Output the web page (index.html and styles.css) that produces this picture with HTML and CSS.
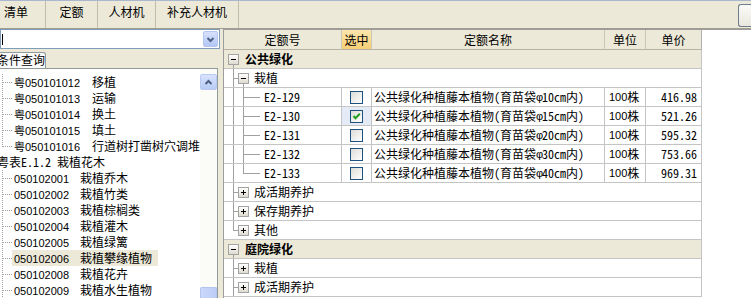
FILE: index.html
```html
<!DOCTYPE html>
<html lang="zh-CN">
<head>
<meta charset="utf-8">
<title>定额</title>
<link rel="stylesheet" href="styles.css">
</head>
<body>
<div class="app">
  <div class="topbar">
    <div class="tab t1">清单</div>
    <div class="tab t2">定额</div>
    <div class="tab t3">人材机</div>
    <div class="tab t4">补充人材机</div>
    <div class="spacer"></div>
    <div class="tbtn"></div>
  </div>
  <div class="main">
    <div class="left">
      <div class="combo">
        <span class="caret"></span>
        <span class="ddbtn"><svg width="13" height="13" viewBox="0 0 13 13"><polyline points="3.5,5 6.5,8 9.5,5" fill="none" stroke="#4d6185" stroke-width="2"/></svg></span>
      </div>
      <div class="qtab">条件查询</div>
      <div class="treepanel">
        <div class="treelist">
          <div class="tnode"><span class="lbl"><span class="code cw1">粤050101012</span>移植</span></div>
          <div class="tnode"><span class="lbl"><span class="code cw1">粤050101013</span>运输</span></div>
          <div class="tnode"><span class="lbl"><span class="code cw1">粤050101014</span>换土</span></div>
          <div class="tnode"><span class="lbl"><span class="code cw1">粤050101015</span>填土</span></div>
          <div class="tnode last"><span class="lbl"><span class="code cw1">粤050101016</span>行道树打凿树穴调堆</span></div>
          <div class="tnode root"><span class="lbl">粤表E.1.2 栽植花木</span></div>
          <div class="tnode"><span class="lbl"><span class="code cw2">050102001</span>栽植乔木</span></div>
          <div class="tnode"><span class="lbl"><span class="code cw2">050102002</span>栽植竹类</span></div>
          <div class="tnode"><span class="lbl"><span class="code cw2">050102003</span>栽植棕榈类</span></div>
          <div class="tnode"><span class="lbl"><span class="code cw2">050102004</span>栽植灌木</span></div>
          <div class="tnode"><span class="lbl"><span class="code cw2">050102005</span>栽植绿篱</span></div>
          <div class="tnode"><span class="lbl sel"><span class="code cw2">050102006</span>栽植攀缘植物</span></div>
          <div class="tnode"><span class="lbl"><span class="code cw2">050102008</span>栽植花卉</span></div>
          <div class="tnode"><span class="lbl"><span class="code cw2">050102009</span>栽植水生植物</span></div>
        </div>
        <div class="vscroll">
          <div class="sbtn"><svg width="13" height="13" viewBox="0 0 13 13"><polyline points="3.5,8 6.5,5 9.5,8" fill="none" stroke="#4d6185" stroke-width="2"/></svg></div>
          <div class="track"></div>
          <div class="thumb"></div>
        </div>
      </div>
    </div>
    <div class="right">
      <div class="grid">
        <div class="hd">定额号</div>
        <div class="hd hsel">选中</div>
        <div class="hd">定额名称</div>
        <div class="hd">单位</div>
        <div class="hd">单价</div>

        <div class="cell grow groot"><span class="exp"></span><b class="gname">公共绿化</b></div>
        <div class="cell grow l2 open"><span class="exp"></span><span class="gtxt">栽植</span></div>

        <div class="cell k1 l3">E2-129</div>
        <div class="cell k2"><span class="cb"></span></div>
        <div class="cell k3">公共绿化种植藤本植物(育苗袋<span class="phi">φ</span>10cm内)</div>
        <div class="cell k4"><span class="sans">100</span>株</div>
        <div class="cell k5">416.98</div>

        <div class="cell k1 l3">E2-130</div>
        <div class="cell k2 on"><span class="cb"><svg width="11" height="11" viewBox="0 0 11 11"><path d="M2.5 5 L4.5 7.2 L8.8 2.8" fill="none" stroke="#21a121" stroke-width="2"/></svg></span></div>
        <div class="cell k3">公共绿化种植藤本植物(育苗袋<span class="phi">φ</span>15cm内)</div>
        <div class="cell k4"><span class="sans">100</span>株</div>
        <div class="cell k5">521.26</div>

        <div class="cell k1 l3">E2-131</div>
        <div class="cell k2"><span class="cb"></span></div>
        <div class="cell k3">公共绿化种植藤本植物(育苗袋<span class="phi">φ</span>20cm内)</div>
        <div class="cell k4"><span class="sans">100</span>株</div>
        <div class="cell k5">595.32</div>

        <div class="cell k1 l3">E2-132</div>
        <div class="cell k2"><span class="cb"></span></div>
        <div class="cell k3">公共绿化种植藤本植物(育苗袋<span class="phi">φ</span>30cm内)</div>
        <div class="cell k4"><span class="sans">100</span>株</div>
        <div class="cell k5">753.66</div>

        <div class="cell k1 l3 last">E2-133</div>
        <div class="cell k2"><span class="cb"></span></div>
        <div class="cell k3">公共绿化种植藤本植物(育苗袋<span class="phi">φ</span>40cm内)</div>
        <div class="cell k4"><span class="sans">100</span>株</div>
        <div class="cell k5">969.31</div>

        <div class="cell grow l2"><span class="exp plus"></span><span class="gtxt">成活期养护</span></div>
        <div class="cell grow l2"><span class="exp plus"></span><span class="gtxt">保存期养护</span></div>
        <div class="cell grow l2 last"><span class="exp plus"></span><span class="gtxt">其他</span></div>

        <div class="cell grow groot"><span class="exp"></span><b class="gname">庭院绿化</b></div>
        <div class="cell grow l2"><span class="exp plus"></span><span class="gtxt">栽植</span></div>
        <div class="cell grow l2"><span class="exp plus"></span><span class="gtxt">成活期养护</span></div>
      </div>
    </div>
  </div>
</div>
</body>
</html>
```
FILE: styles.css
```css
* { box-sizing: border-box; }
html, body { margin: 0; padding: 0; }
body {
  width: 751px;
  height: 298px;
  overflow: hidden;
  background: #ece9d8;
  font-family: "Noto Sans Mono CJK SC", "Noto Sans CJK SC", sans-serif;
  font-size: 12px;
  color: #000;
}
.app { display: flex; flex-direction: column; height: 298px; }

/* top tab bar */
.topbar {
  height: 29px;
  flex-shrink: 0;
  display: flex;
  border-top: 1px solid #a9b8cf;
  border-bottom: 1px solid #a19e90;
  background: #ece9d8;
}
.tab {
  display: flex;
  align-items: center;
  justify-content: center;
  border-right: 1px solid #c0bdae;
  padding-bottom: 5px;
  line-height: 14px;
  white-space: nowrap;
}
.t1 { width: 46px; justify-content: flex-start; padding-left: 4px; }
.t2 { width: 52px; }
.t3 { width: 58px; }
.t4 { width: 83px; }
.spacer { flex: 1; }
.tbtn {
  width: 13px;
  margin: 3px 0 1px;
  border: 1px solid #6f7c8c;
  border-right: none;
  border-radius: 3px 0 0 3px;
  background: linear-gradient(#fbfbf8, #e9e7dd);
}

.main { flex: 1; min-height: 0; display: flex; }

/* left panel */
.left { width: 220px; display: flex; flex-direction: column; }
.combo {
  height: 20px;
  border: 1px solid #7f9db9;
  background: #fff;
  display: flex;
  align-items: center;
  justify-content: space-between;
  padding: 0 1px 0 1px;
}
.caret { width: 1px; height: 11px; background: #000; }
.ddbtn {
  width: 15px;
  height: 16px;
  border: 1px solid #b4c6f0;
  border-radius: 2px;
  background: linear-gradient(#d6e1fc, #b4c7f4);
  display: flex;
  align-items: center;
  justify-content: center;
}
.qtab {
  margin-top: 3px;
  width: 46px;
  height: 16px;
  border: 1px solid #919b9c;
  border-left: none;
  border-bottom: none;
  border-radius: 0 3px 0 0;
  background: #fcfcfe;
  line-height: 14px;
  white-space: nowrap;
  overflow: hidden;
  text-indent: -3px;
}
.treepanel {
  flex: 1;
  min-height: 0;
  width: 218px;
  display: flex;
  background: #fff;
  border-top: 1px solid #919b9c;
  border-right: 1px solid #919b9c;
}
.treelist { flex: 1; overflow: hidden; padding-top: 5px; }
.tnode {
  height: 16px;
  line-height: 16px;
  white-space: nowrap;
  padding-left: 14px;
  background:
    repeating-linear-gradient(to right, #a0a0a0 0 1px, transparent 1px 2px) 3px 8px / 9px 1px no-repeat,
    repeating-linear-gradient(#a0a0a0 0 1px, transparent 1px 2px) 2px 0 / 1px 100% no-repeat;
}
.tnode.last {
  background:
    repeating-linear-gradient(to right, #a0a0a0 0 1px, transparent 1px 2px) 3px 8px / 9px 1px no-repeat,
    repeating-linear-gradient(#a0a0a0 0 1px, transparent 1px 2px) 2px 0 / 1px 9px no-repeat;
}
.tnode.root { padding-left: 0; background: none; }
.tnode.root .lbl { margin-left: -3px; padding: 0; }
.lbl { display: inline-block; padding: 0 6px 0 2px; margin-left: -2px; height: 16px; }
.lbl.sel { background: #ece9d8; }
.code {
  display: inline-block;
  font-family: "Liberation Sans", "Noto Sans CJK SC", sans-serif;
  font-size: 11px;
}
.cw1 { width: 78px; }
.cw2 { width: 66px; }

.vscroll {
  width: 17px;
  display: flex;
  flex-direction: column;
  background: #fbfbf8;
  padding-top: 5px;
}
.sbtn {
  height: 16px;
  border: 1px solid #b9cbf3;
  border-radius: 2px;
  background: linear-gradient(#d7e2fc, #b9cbf5);
  display: flex;
  align-items: center;
  justify-content: center;
}
.track { flex: 1; }
.thumb {
  height: 11px;
  border: 1px solid #b3c5ef;
  border-bottom: none;
  border-radius: 2px 2px 0 0;
  background: linear-gradient(to right, #c9d8fb, #bccdf6);
}

/* right panel */
.right {
  flex: 1;
  margin-left: 3px;
  border-left: 1px solid #9d9d9d;
  border-top: 1px solid #9d9d9d;
  background: #fff;
}
.grid {
  display: grid;
  width: 478px;
  grid-template-columns: 118px 30px 233px 41px 56px;
  grid-template-rows: 20px;
  grid-auto-rows: 19px;
}
.hd {
  background: #ece9d8;
  border-right: 1px solid #cbc7b8;
  border-bottom: 1px solid #b6b3a5;
  display: flex;
  align-items: center;
  justify-content: center;
  line-height: 14px;
}
.hsel { background: linear-gradient(#fce6ad, #f7cf76); }
.grid .hd:nth-child(5) { border-right: 1px solid #b0b0b0; }

.cell {
  border-right: 1px solid #c4c4c4;
  border-bottom: 1px solid #c4c4c4;
  display: flex;
  align-items: center;
  white-space: nowrap;
  overflow: hidden;
  line-height: 16px;
}
.grow { grid-column: 1 / -1; }
.groot { background: linear-gradient(#a0a0a0, #a0a0a0) 9px 14px / 1px 5px no-repeat, #ece9d8; padding-left: 4px; }
.gname { margin-left: 6px; font-weight: bold; }
.gtxt { margin-left: 5px; }

.l2 {
  padding-left: 14px;
  background:
    linear-gradient(#a0a0a0, #a0a0a0) 9px 0 / 1px 100% no-repeat,
    linear-gradient(#a0a0a0, #a0a0a0) 9px 9px / 5px 1px no-repeat;
}
.l2.last {
  background:
    linear-gradient(#a0a0a0, #a0a0a0) 9px 0 / 1px 10px no-repeat,
    linear-gradient(#a0a0a0, #a0a0a0) 9px 9px / 5px 1px no-repeat;
}
.l2.open {
  background:
    linear-gradient(#a0a0a0, #a0a0a0) 9px 0 / 1px 100% no-repeat,
    linear-gradient(#a0a0a0, #a0a0a0) 9px 9px / 5px 1px no-repeat,
    linear-gradient(#a0a0a0, #a0a0a0) 19px 14px / 1px 5px no-repeat;
}
.l3 {
  padding-left: 40px;
  background:
    linear-gradient(#a0a0a0, #a0a0a0) 9px 0 / 1px 100% no-repeat,
    linear-gradient(#a0a0a0, #a0a0a0) 19px 0 / 1px 100% no-repeat,
    linear-gradient(#a0a0a0, #a0a0a0) 19px 9px / 17px 1px no-repeat;
}
.l3.last {
  background:
    linear-gradient(#a0a0a0, #a0a0a0) 9px 0 / 1px 100% no-repeat,
    linear-gradient(#a0a0a0, #a0a0a0) 19px 0 / 1px 10px no-repeat,
    linear-gradient(#a0a0a0, #a0a0a0) 19px 9px / 17px 1px no-repeat;
}

.exp {
  flex-shrink: 0;
  width: 11px;
  height: 11px;
  border: 1px solid #a3a3a3;
  background:
    linear-gradient(#000, #000) center / 5px 1px no-repeat,
    linear-gradient(#ffffff, #dedbcf);
}
.exp.plus {
  background:
    linear-gradient(#000, #000) center / 5px 1px no-repeat,
    linear-gradient(#000, #000) center / 1px 5px no-repeat,
    linear-gradient(#ffffff, #dedbcf);
}

.k2 { justify-content: center; }
.k2.on { background: #e4ebf7; }
.cb {
  width: 13px;
  height: 13px;
  border: 1px solid #1c5180;
  background: linear-gradient(135deg, #dcdcd7, #ffffff);
  display: flex;
  align-items: center;
  justify-content: center;
}
.k3 { padding-left: 2px; }
.k4 { padding-left: 4px; }
.k5 { justify-content: flex-end; padding-right: 4px; }
.phi { font-family: "Liberation Sans", sans-serif; font-size: 11px; display: inline-block; width: 6px; text-align: center; }
.sans { font-family: "Liberation Sans", sans-serif; font-size: 11px; }
```
